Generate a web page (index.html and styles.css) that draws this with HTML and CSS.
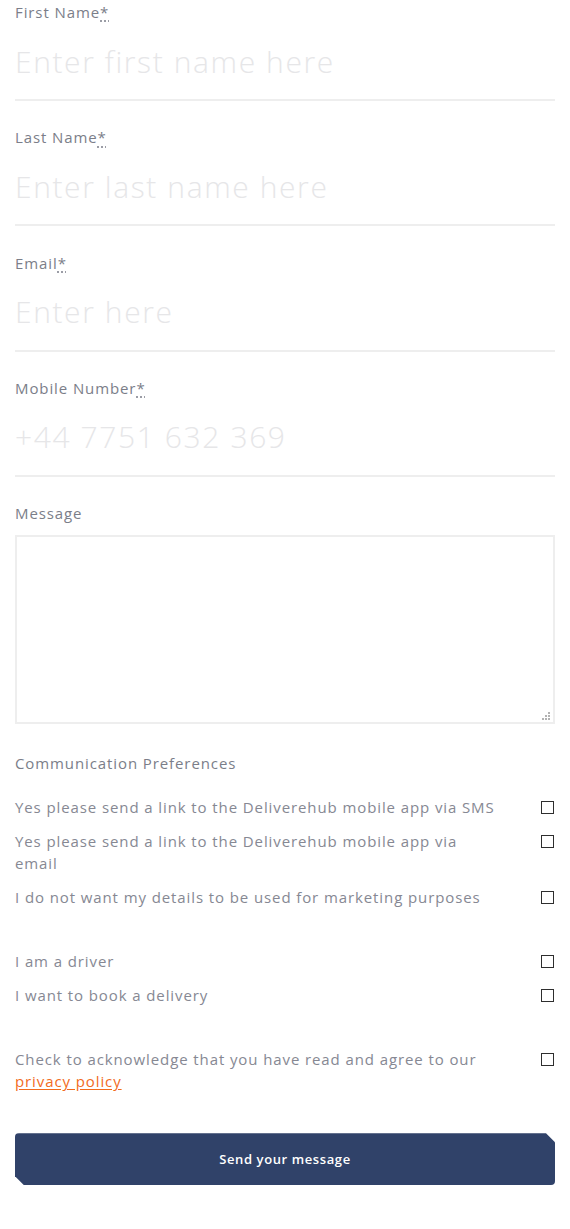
FILE: index.html
```html
<!DOCTYPE html>
<html lang="en">
<head>
<meta charset="utf-8">
<title>Contact</title>
<link rel="stylesheet" href="styles.css">
</head>
<body>
<form class="form">
  <div class="field">
    <label class="label">First Name<abbr title="required">*</abbr></label>
    <input class="text-input" type="text" placeholder="Enter first name here">
  </div>
  <div class="field">
    <label class="label">Last Name<abbr title="required">*</abbr></label>
    <input class="text-input" type="text" placeholder="Enter last name here">
  </div>
  <div class="field">
    <label class="label">Email<abbr title="required">*</abbr></label>
    <input class="text-input" type="email" placeholder="Enter here">
  </div>
  <div class="field">
    <label class="label">Mobile Number<abbr title="required">*</abbr></label>
    <input class="text-input" type="tel" placeholder="+44 7751 632 369">
  </div>
  <div class="field field-message">
    <label class="label">Message</label>
    <div class="textarea-wrap">
      <textarea class="textarea"></textarea>
      <svg class="grip" width="9" height="9" viewBox="0 0 9 9" aria-hidden="true">
        <rect x="6" y="0" width="2" height="2" fill="#b3b3b3"/>
        <rect x="3" y="3" width="2" height="2" fill="#b3b3b3"/>
        <rect x="6" y="3" width="2" height="2" fill="#b3b3b3"/>
        <rect x="0" y="6" width="2" height="2" fill="#b3b3b3"/>
        <rect x="3" y="6" width="2" height="2" fill="#b3b3b3"/>
        <rect x="6" y="6" width="2" height="2" fill="#b3b3b3"/>
      </svg>
    </div>
  </div>

  <div class="prefs">
    <div class="prefs-title">Communication Preferences</div>
    <div class="group">
      <label class="check-row"><span class="check-text">Yes please send a link to the Deliverehub mobile app via SMS</span><input class="check" type="checkbox"></label>
      <label class="check-row"><span class="check-text">Yes please send a link to the Deliverehub mobile app via email</span><input class="check" type="checkbox"></label>
      <label class="check-row"><span class="check-text">I do not want my details to be used for marketing purposes</span><input class="check" type="checkbox"></label>
    </div>
    <div class="group">
      <label class="check-row"><span class="check-text">I am a driver</span><input class="check" type="checkbox"></label>
      <label class="check-row"><span class="check-text">I want to book a delivery</span><input class="check" type="checkbox"></label>
    </div>
    <div class="group">
      <label class="check-row"><span class="check-text">Check to acknowledge that you have read and agree to our <a class="link" href="#">privacy policy</a></span><input class="check" type="checkbox"></label>
    </div>
  </div>

  <button class="submit" type="button">Send your message</button>
</form>
</body>
</html>
```

FILE: styles.css
```css
* { box-sizing: border-box; }

html, body {
  margin: 0;
  padding: 0;
  background: #ffffff;
}

body {
  font-family: "Open Sans", "Liberation Sans", sans-serif;
  color: #7b7e89;
}

.form {
  display: flex;
  flex-direction: column;
  padding: 1px 15px 40px;
}

.field {
  display: flex;
  flex-direction: column;
  margin-bottom: 25.3px;
}

.label {
  display: block;
  font-size: 15px;
  line-height: 22px;
  height: 22px;
  letter-spacing: 0.9px;
  color: #7b7e89;
}

.label abbr {
  text-decoration: underline dotted;
  text-underline-offset: 3px;
  cursor: help;
}

.text-input {
  display: block;
  width: 100%;
  height: 78px;
  margin: 0;
  padding: 0;
  border: none;
  border-bottom: 2px solid #eeeeee;
  font-family: inherit;
  font-size: 30px;
  font-weight: 300;
  letter-spacing: 1.6px;
  color: #333;
  background: transparent;
  outline: none;
}

.text-input::placeholder {
  color: #e6e6e8;
}

.field-message {
  margin-bottom: 0;
}

.textarea-wrap {
  position: relative;
  margin-top: 11px;
}

.textarea {
  display: block;
  width: 100%;
  height: 189px;
  border: 2px solid #eeeeee;
  font-family: inherit;
  font-size: 15px;
  resize: none;
  outline: none;
}

.grip {
  position: absolute;
  right: 4px;
  bottom: 3px;
}

.prefs {
  margin-top: 28px;
  display: flex;
  flex-direction: column;
}

.prefs-title {
  font-size: 15px;
  line-height: 22px;
  letter-spacing: 0.9px;
  margin-bottom: 22px;
}

.group {
  display: flex;
  flex-direction: column;
  gap: 12px;
  margin-bottom: 42px;
}

.group:last-child {
  margin-bottom: 0;
}

.check-row {
  display: flex;
  justify-content: space-between;
  align-items: flex-start;
  gap: 20px;
  font-size: 15px;
  line-height: 22px;
  letter-spacing: 0.9px;
  color: #868893;
}

.check-text {
  max-width: 484px;
}

.check {
  appearance: none;
  -webkit-appearance: none;
  flex: 0 0 auto;
  width: 13px;
  height: 13px;
  margin: 5px 1px 0 0;
  border: 1.5px solid #2e2e2e;
  border-radius: 0;
  background: #fff;
}

.link {
  color: #f26b1d;
  text-decoration: underline;
  text-underline-offset: 2px;
}

.submit {
  margin-top: 41px;
  width: 100%;
  height: 52px;
  border: none;
  border-radius: 4px;
  background: #304269;
  color: #ffffff;
  font-family: inherit;
  font-size: 13px;
  font-weight: 600;
  letter-spacing: 0.6px;
  clip-path: polygon(0 0, calc(100% - 9px) 0, 100% 9px, 100% 100%, 9px 100%, 0 calc(100% - 9px));
  cursor: pointer;
}
```
